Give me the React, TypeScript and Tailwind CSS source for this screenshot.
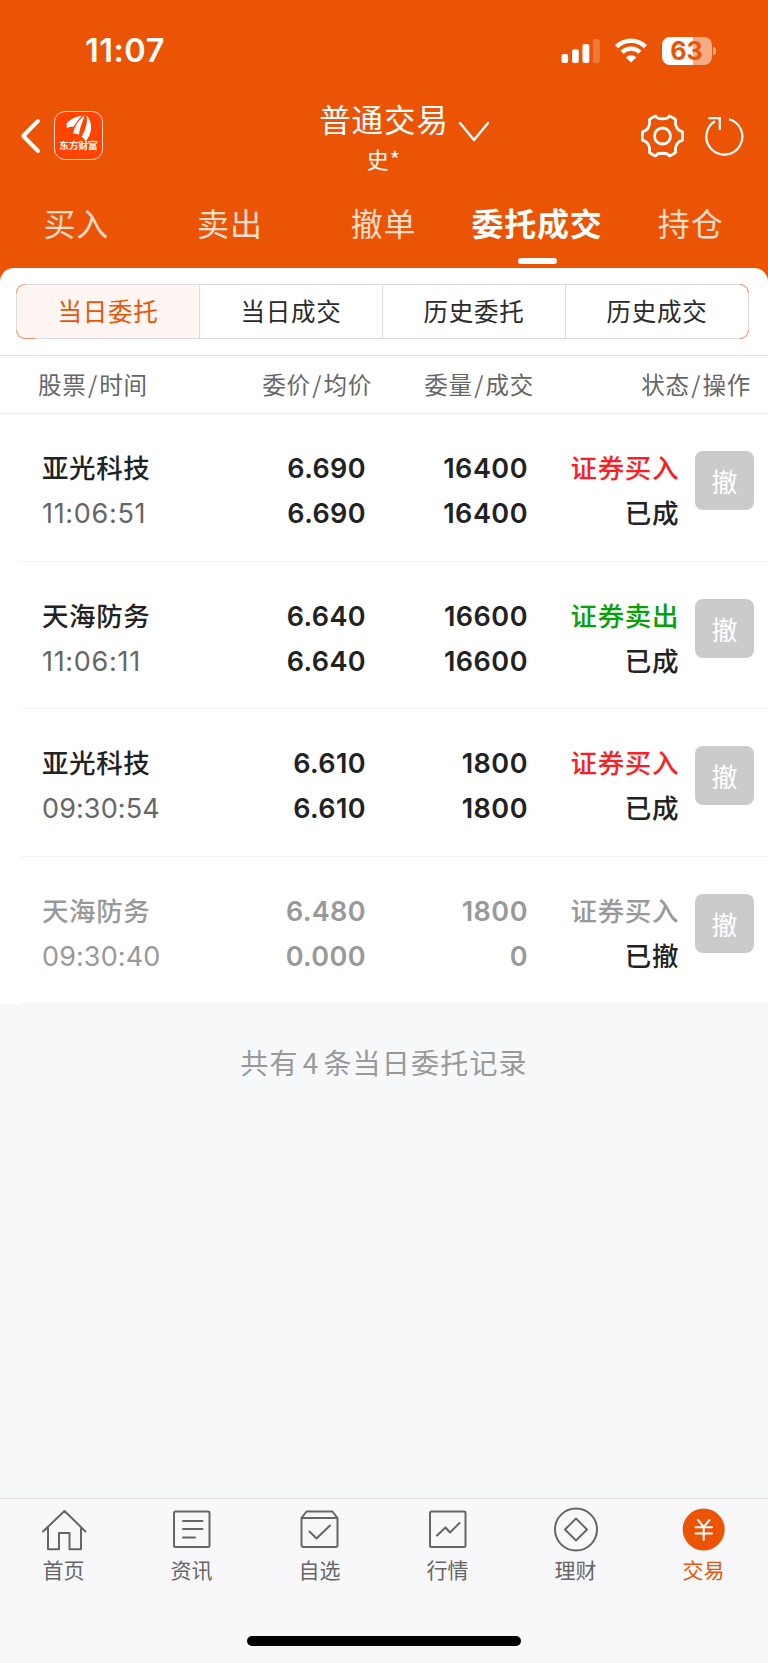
import { useState } from "react";
import clsx from "clsx";

const tabs = ["买入", "卖出", "撤单", "委托成交", "持仓"];
const segments = ["当日委托", "当日成交", "历史委托", "历史成交"];

const orders = [
    { id: 1, name: "亚光科技", time: "11:06:51", price: "6.690", avg: "6.690", amount: "16400", filled: "16400", side: "证券买入", tone: "buy", status: "已成" },
    { id: 2, name: "天海防务", time: "11:06:11", price: "6.640", avg: "6.640", amount: "16600", filled: "16600", side: "证券卖出", tone: "sell", status: "已成" },
    { id: 3, name: "亚光科技", time: "09:30:54", price: "6.610", avg: "6.610", amount: "1800", filled: "1800", side: "证券买入", tone: "buy", status: "已成" },
    { id: 4, name: "天海防务", time: "09:30:40", price: "6.480", avg: "0.000", amount: "1800", filled: "0", side: "证券买入", tone: "void", status: "已撤" },
];

const sideColor: Record<string, string> = {
    buy: "text-[#fb1f25]",
    sell: "text-[#0aa00a]",
    void: "text-[#999999]",
};

function StatusBar() {
    return (
        <div className="flex h-[102px] items-center justify-between pl-[85px] pr-[52px]">
            <span className="pt-px font-['Inter',sans-serif] text-[32.500px] font-semibold leading-none tracking-[0.500px]">11:07</span>
            <div className="flex items-center">
                <svg width="39" height="26" viewBox="0 0 39 26" fill="#fff">
                    <rect x="0.5" y="16" width="6.6" height="9" rx="2" />
                    <rect x="11" y="11.3" width="6.8" height="13.7" rx="2" />
                    <rect x="21.5" y="6" width="6.8" height="19" rx="2" />
                    <rect x="32" y="1" width="6.8" height="24" rx="2" opacity="0.22" />
                </svg>
                <svg className="ml-[14px]" width="34" height="26" viewBox="0 0 34 26" fill="none" stroke="#fff">
                    <path d="M2.6 8.6 A20.5 20.5 0 0 1 31.4 8.6" strokeWidth="4.6" />
                    <path d="M8 14.2 A13 13 0 0 1 26 14.2" strokeWidth="4.4" />
                    <path d="M17 24.6 L11.7 19.4 A7.6 7.6 0 0 1 22.3 19.4 Z" fill="#fff" stroke="none" />
                </svg>
                <div className="ml-[14px] flex items-center gap-[1.5px]">
                    <div className="flex h-7 w-[50px] items-center justify-center rounded-[8px] bg-[linear-gradient(90deg,#fff_62.5%,#f5ab84_62.5%)] font-['Inter',sans-serif] text-[25px] font-bold leading-none text-[#ea5404]">
                        63
                    </div>
                    <div className="h-2 w-[3px] rounded-r-full bg-[#f5ab84]" />
                </div>
            </div>
        </div>
    );
}

function NavBar() {
    return (
        <div className="flex h-[68px] justify-between">
            <div className="flex w-[260px] items-center pl-[20px]">
                <svg width="22" height="36" viewBox="0 0 22 36" fill="none" stroke="#fff" strokeWidth="4" strokeLinecap="round" strokeLinejoin="round">
                    <path d="M18 3 L3.2 18 L18 33" />
                </svg>
                <div className="-mt-[2px] ml-3 flex h-[49px] w-[49px] flex-col items-center rounded-[11px] border border-[#ffd9c8] bg-[#ff4300]">
                    <svg className="mt-[3px]" width="26" height="27" viewBox="0 0 26 27" fill="#fff">
                        <path d="M0.5 8.5 C4.5 4 10 1.200 16.500 0.500 C12 4 10.500 8.500 7 12 C5 11.300 2.500 12 0.900 13.500 Z" />
                        <path d="M18.500 0.300 C17.500 5.500 14 11 13 19.800 C11.500 18.700 9.500 18.500 7.200 18.500 C8.500 11.500 13 4.500 18.500 0.300 Z" />
                        <path d="M20.500 0.300 C24 4 25.600 8.500 25 14 C24.500 19 22.500 23 19.700 26.500 C18.700 24.500 17.200 22.500 15.500 21.500 C19.500 15.500 21.800 8 20.500 0.300 Z" />
                    </svg>
                    <span className="-mt-px whitespace-nowrap font-['Noto_Sans_CJK_SC',sans-serif] text-[9.6px] font-bold leading-[9px]">东方财富</span>
                </div>
            </div>
            <div className="relative flex flex-col items-center">
                <span className="-mt-[2px] text-[31.500px] leading-9 tracking-[0.900px]">普通交易</span>
                <span className="mt-[10px] text-[22px] leading-6 tracking-[1px]">史*</span>
                <svg className="absolute left-[139px] top-[18px]" width="32" height="22" viewBox="0 0 32 22" fill="none" stroke="#fff" strokeWidth="2.4" strokeLinecap="round" strokeLinejoin="round">
                    <path d="M2 3 L16 20 L30 3" />
                </svg>
            </div>
            <div className="flex w-[260px] items-center justify-end gap-5 pr-[23px]">
                <svg width="46" height="46" viewBox="0 0 46 46" fill="none" stroke="#fff" strokeWidth="2.800" strokeLinejoin="round">
                    <path d="M16.800 3.200 C18 6.600 29 6.600 30.200 3.200 Q30.900 3 31.500 3.400 L36 6 Q36.900 6.600 36.600 7.500 C35.400 12.500 38.500 17.500 42.800 18.400 Q43.600 18.700 43.600 19.500 V26.500 Q43.600 27.300 42.800 27.600 C38.500 28.500 35.400 33.500 36.600 38.500 Q36.900 39.400 36 40 L31.500 42.600 Q30.900 43 30.200 42.800 C29 39.400 18 39.400 16.800 42.800 Q16.100 43 15.500 42.600 L11 40 Q10.100 39.400 10.400 38.500 C11.600 33.500 8.500 28.500 4.200 27.600 Q3.400 27.300 3.400 26.500 V19.500 Q3.400 18.700 4.200 18.400 C8.500 17.500 11.600 12.500 10.400 7.500 Q10.100 6.600 11 6 L15.500 3.400 Q16.100 3 16.800 3.200 Z" />
                    <circle cx="23.500" cy="23" r="8" />
                </svg>
                <svg width="40" height="40" viewBox="0 0 40 40" fill="none" stroke="#fff" strokeWidth="2.200">
                    <path d="M24 3.200 A18 18 0 1 1 10 5.200" />
                    <path d="M3.500 2.200 H14.800 V14" />
                </svg>
            </div>
        </div>
    );
}

function Tabs() {
    const [active, setActive] = useState(3);

    return (
        <div className="flex h-[98px]">
            {tabs.map((tab, index) => (
                <button key={tab} onClick={() => setActive(index)} className="flex w-1/5 flex-col items-center pt-[34px]">
                    <span className={clsx("whitespace-nowrap pr-px text-[32px] leading-9 tracking-[0.800px]", index === active ? "font-bold" : "text-[#fcddcc]")}>
                        {tab}
                    </span>
                    {index === active && <span className="mt-[18px] h-[6px] w-[39px] rounded-full bg-white" />}
                </button>
            ))}
        </div>
    );
}

function Segments() {
    const [active, setActive] = useState(0);

    return (
        <div className="border-b border-[#e3e3e5] px-4 pb-4 pt-4">
            <div className="relative w-[733px]">
                <div className="flex h-[55px] overflow-hidden rounded-[9px] border border-[#d9dce2]">
                    {segments.map((label, index) => (
                        <button
                            key={label}
                            onClick={() => setActive(index)}
                            className={clsx(
                                "flex flex-1 items-center justify-center border-l border-[#d9dce2] text-[24.500px] tracking-[0.700px] first:border-l-0",
                                index === active ? "bg-[#fff5f2] text-[#ea5404]" : "text-[#2b2b2b]"
                            )}
                        >
                            {label}
                        </button>
                    ))}
                </div>
                {/* Accent corners */}
                <span className="absolute left-0 top-0 h-[9px] w-[9px] rounded-tl-[9px] border-l border-t border-[#ee9166]" />
                <span className="absolute bottom-0 left-0 h-[9px] w-[19px] rounded-bl-[9px] border-b border-l border-[#ee9166]" />
                <span className="absolute right-0 top-0 h-[9px] w-[9px] rounded-tr-[9px] border-r border-t border-[#ee9166]" />
                <span className="absolute bottom-0 right-0 h-[9px] w-[9px] rounded-br-[9px] border-b border-r border-[#ee9166]" />
            </div>
        </div>
    );
}

function ColumnTitle({ first, second, className }: { first: string; second: string; className: string }) {
    return (
        <span className={className}>
            {first}
            <span className="mx-[1.500px]">/</span>
            {second}
        </span>
    );
}

function OrderRow({ order }: { order: (typeof orders)[number] }) {
    const muted = order.tone === "void";
    const main = muted ? "text-[#999999]" : "text-[#222222]";

    return (
        <div className="ml-5 flex h-[147.500px] border-b border-[#f4f4f6] pl-[22px] pt-[32px] leading-[45px]">
            <div className="w-[163px]">
                <p className={clsx("-mt-[2px] mb-[2px] text-[26.500px] font-medium tracking-[0.600px]", main)}>{order.name}</p>
                <p
                    className={clsx(
                        "font-['Inter',sans-serif] text-[27px]",
                        order.time.startsWith("11") ? "tracking-[0.700px]" : "tracking-[0.100px]",
                        muted ? "text-[#999999]" : "text-[#666666]"
                    )}
                >
                    {order.time}
                </p>
            </div>
            <div className={clsx("w-[161px] text-right font-['Inter',sans-serif] text-[27px] font-semibold tracking-[0.400px]", main)}>
                <p>{order.price}</p>
                <p>{order.avg}</p>
            </div>
            <div className={clsx("w-[162px] text-right font-['Inter',sans-serif] text-[27px] font-semibold tracking-[0.500px]", main)}>
                <p>{order.amount}</p>
                <p>{order.filled}</p>
            </div>
            <div className="-mt-[2px] w-[151px] text-right text-[26.500px] font-medium tracking-[0.600px]">
                <p className={sideColor[order.tone]}>{order.side}</p>
                <p className="text-[#222222]">{order.status}</p>
            </div>
            <button className="ml-4 mt-[5px] h-[59px] w-[59px] rounded-[8px] bg-[#cbcbcb] text-[26px] leading-[57px] text-white">撤</button>
        </div>
    );
}

const navItems = [
    { label: "首页", icon: <path d="M2 24.500 L23.500 4 L44.500 24.500 M7 20 V42.300 H18 V26 H28.500 V42.300 H40 V20" /> },
    { label: "资讯", icon: <><rect x="5" y="4.500" width="35.500" height="35.500" rx="1.500" /><path d="M14 14 H33.500 M14 22 H33.500 M14 30.500 H26" /></> },
    { label: "自选", icon: <><path d="M4.500 11 V38 Q4.500 40 6.500 40 H38.500 Q40.500 40 40.500 38 V11 L35.500 4.500 H9.500 Z M4.500 11 H40.500" /><path d="M12.500 24.500 L19.500 31.500 L33 18.500" /></> },
    { label: "行情", icon: <><rect x="5" y="4.500" width="35.500" height="35.500" rx="1.500" /><path d="M12 28.500 L20.500 20.500 L25 25.500 L34.500 16" /></> },
    { label: "理财", icon: <><circle cx="23" cy="22.500" r="21" /><path d="M23 11.500 L34 22.500 L23 33.500 L12 22.500 Z" /></> },
    { label: "交易", icon: <><circle cx="22.700" cy="22.500" r="21" fill="#ea5404" stroke="none" /><path stroke="#fff" d="M17 13 L22.700 20 L28.500 13 M14.500 20.300 H31 M14.500 26.500 H31 M22.700 20.500 V33" /></> },
];

function BottomBar() {
    return (
        <div className="flex h-[165px] flex-col justify-between border-t border-[#e0e0e2] bg-[#f8f8fb]">
            <div className="flex pt-2">
                {navItems.map((item, index) => (
                    <div key={item.label} className={clsx("flex w-1/6 flex-col items-center", index === 5 ? "text-[#ea5404]" : "text-[#666666]")}>
                        <svg width="46" height="46" viewBox="0 0 46 46" fill="none" stroke="currentColor" strokeWidth="2" strokeLinecap="round" strokeLinejoin="round">
                            {item.icon}
                        </svg>
                        <span className="mt-[4px] pr-px text-[21px] leading-6">{item.label}</span>
                    </div>
                ))}
            </div>
            <div className="mb-[17px] h-[10px] w-[274px] self-center rounded-full bg-black" />
        </div>
    );
}

export default function App() {
    return (
        <div className="flex h-[1663px] w-[768px] flex-col overflow-hidden bg-[#f7f8fa] font-['Noto_Sans_CJK_SC',sans-serif]">
            <header className="bg-[#ea5404] text-white">
                <StatusBar />
                <NavBar />
                <Tabs />
            </header>
            <div className="bg-[linear-gradient(#ea5404_50%,#f7f8fa_50%)]">
                <main className="rounded-t-[14px] bg-white">
                    <Segments />
                    {/* Column titles */}
                    <div className="flex h-[58px] items-center border-b border-[#ececee] pl-[38px] text-[23.500px] tracking-[0.700px] text-[#666666]">
                        <ColumnTitle first="股票" second="时间" className="w-[157px]" />
                        <ColumnTitle first="委价" second="均价" className="w-[177px] text-right" />
                        <ColumnTitle first="委量" second="成交" className="w-[162px] text-right" />
                        <ColumnTitle first="状态" second="操作" className="w-[217px] text-right" />
                    </div>
                    {orders.map((order) => (
                        <OrderRow key={order.id} order={order} />
                    ))}
                </main>
            </div>
            <p className="mt-[38px] text-center text-[28px] leading-10 tracking-[1.200px] text-[#999999]">
                共有<span className="mx-[4px]">4</span>条当日委托记录
            </p>
            <div className="flex-1" />
            <BottomBar />
        </div>
    );
}
